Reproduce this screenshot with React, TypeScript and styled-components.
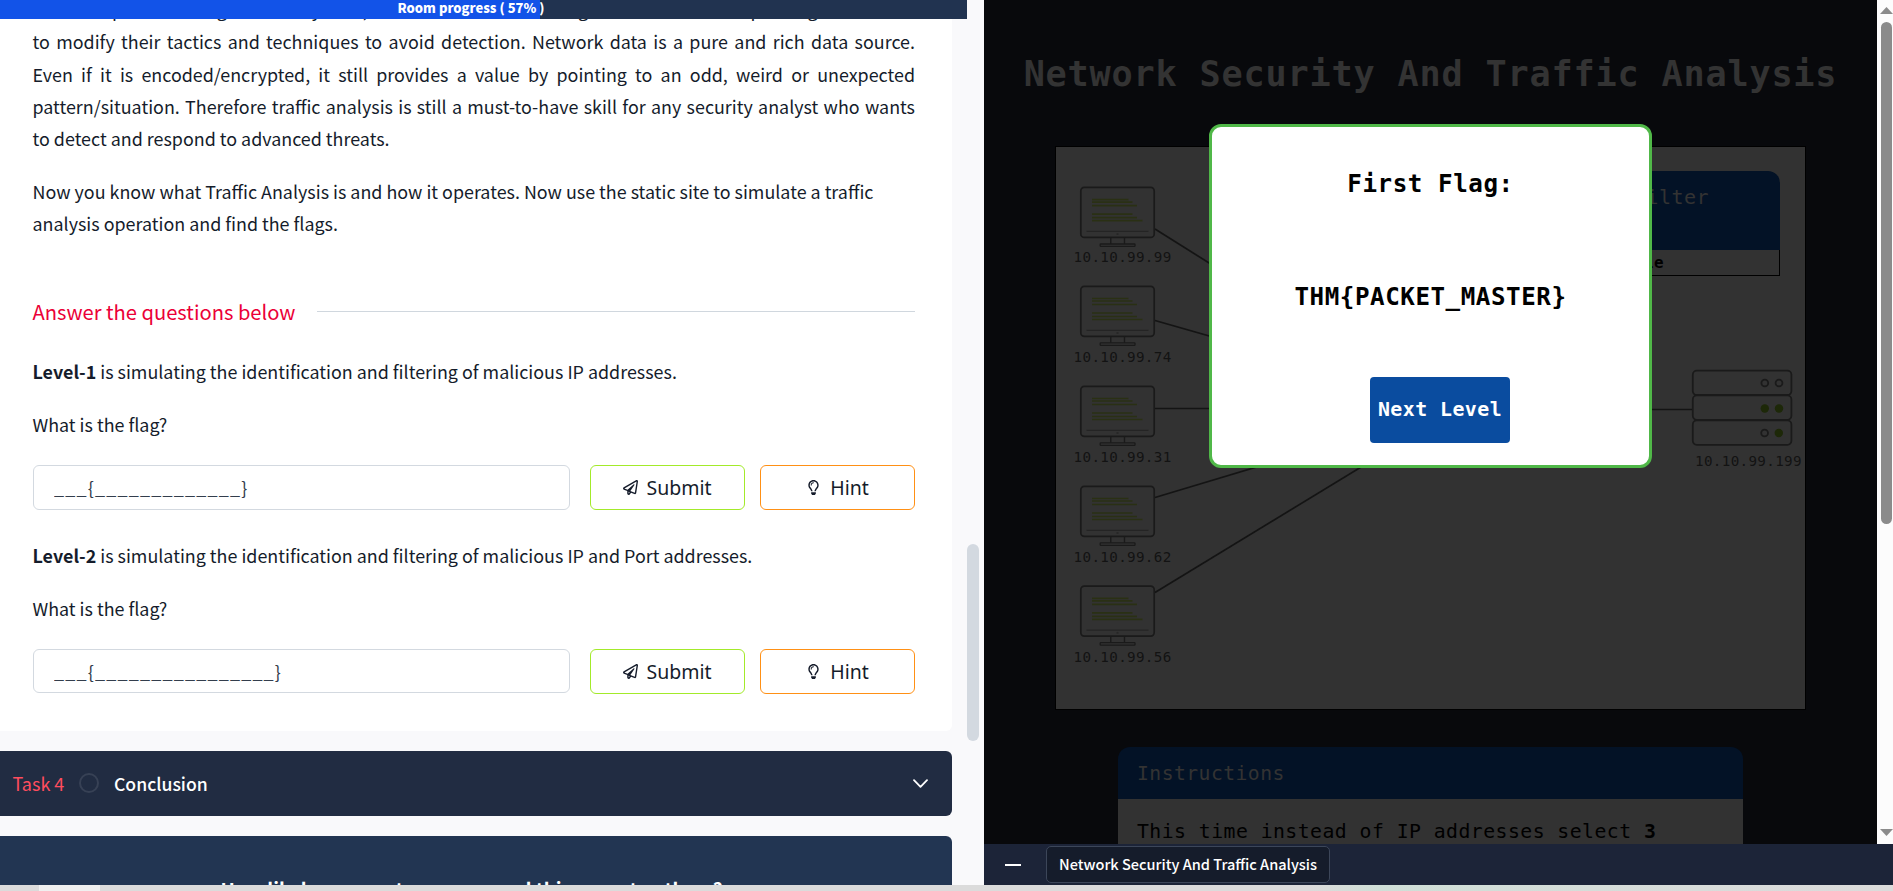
import React from 'react';
import styled, { createGlobalStyle, css } from 'styled-components';
import { FaRegLightbulb, FaRegPaperPlane } from 'react-icons/fa';

const sans = `'Noto Sans CJK SC', 'Open Sans', sans-serif`;
const monoFamily = `'DejaVu Sans Mono', 'Liberation Mono', monospace`;

const mono = (size: number) => css`
  font-family: ${monoFamily};
  font-size: ${size * 0.88}px;
  letter-spacing: ${size * 0.0202}px;
`;

const GlobalStyle = createGlobalStyle`
  * { box-sizing: border-box; }
  body { margin: 0; background: #f9f9fb; overflow: hidden; }
  p, h1, h2 { margin: 0; }
  button, input { font: inherit; }
`;

const Screen = styled.div`
  display: flex;
  flex-direction: column;
  width: 1893px;
  height: 891px;
  overflow: hidden;
  font-family: ${sans};
  color: #151c2b;
`;

const Workspace = styled.div`
  display: flex;
  height: 885px;
`;

const DesktopEdge = styled.div`
  height: 6px;
  padding-left: 39px;
  background: linear-gradient(90deg, #dbdbdb 0 1310px, #cfdfd7 1380px, #d8dcda 1700px, #dbdbdb 1888px);
`;

const EdgeHighlight = styled.div`
  width: 61px;
  height: 6px;
  background: #f0f0f0;
`;

/* Room pane */

const RoomPane = styled.section`
  display: flex;
  flex-direction: column;
  width: 984px;
  height: 885px;
  overflow: hidden;
  background: #f9f9fb;
`;

const ProgressBar = styled.div`
  flex: none;
  width: 967px;
  height: 19px;
  background: linear-gradient(90deg, #1253e8 0 540px, #213350 540px);
  color: #fff;
  font-size: 13px;
  font-weight: 900;
  line-height: 15px;
  padding-left: 397.5px;
  white-space: pre;
`;

const RoomBody = styled.div`
  display: flex;
  flex: 1;
  min-height: 0;
`;

const RoomColumn = styled.div`
  display: flex;
  flex-direction: column;
  gap: 20px;
  width: 952px;
  overflow: hidden;
`;

const RoomScrollTrack = styled.div`
  width: 32px;
  padding: 525px 0 0 15px;
`;

const RoomScrollThumb = styled.div`
  width: 12px;
  height: 197px;
  border-radius: 6px;
  background: #d3d9e0;
`;

const TaskCard = styled.article`
  flex: none;
  height: 712px;
  padding: 0 37px 0 33px;
  border-radius: 0 0 6px 0;
  background: #fff;
  overflow: hidden;
  font-size: 17.9px;
  line-height: 32.2px;
`;

const TextLine = styled.p<{ $justify?: boolean; $top?: number }>`
  height: 32.2px;
  margin-top: ${(p) => p.$top ?? 0}px;
  margin-left: -0.5px;
  white-space: nowrap;
  text-align: ${(p) => (p.$justify ? 'justify' : 'left')};
  text-align-last: ${(p) => (p.$justify ? 'justify' : 'left')};
`;

const SectionTitle = styled.h2`
  display: flex;
  align-items: center;
  gap: 21px;
  height: 36px;
  margin: 54.5px 0 0 -0.5px;
  color: #eb0037;
  font-size: 20.15px;
  font-weight: 400;
  line-height: 36px;

  &::after {
    content: '';
    flex: 1;
    height: 1px;
    background: #d0d7de;
  }
`;

const AnswerRow = styled.div<{ $top: number }>`
  display: flex;
  margin-top: ${(p) => p.$top}px;
`;

const AnswerInput = styled.input<{ $height: number }>`
  width: 537px;
  height: ${(p) => p.$height}px;
  margin-right: 20px;
  padding: 0 20px 1px;
  border: 1px solid #d3d9e0;
  border-radius: 6px;
  background: #fff;
  color: #333d4c;
  font-size: 18px;
  letter-spacing: 1.18px;
  outline: none;

  &::placeholder {
    color: #333d4c;
  }
`;

const ActionButton = styled.button<{ $color: string; $gap: number }>`
  display: flex;
  align-items: center;
  justify-content: center;
  gap: ${(p) => p.$gap}px;
  width: 155px;
  height: 45px;
  margin-right: 15px;
  padding: 0;
  border: 1px solid ${(p) => p.$color};
  border-radius: 6px;
  background: #fff;
  color: #151c2b;
  font-family: 'Noto Sans', 'Open Sans', sans-serif;
  font-size: 19.5px;

  svg {
    width: auto;
    height: 15px;
  }

  &:last-child {
    margin-right: 0;
  }
`;

const TaskHeader = styled.div`
  display: flex;
  flex: none;
  align-items: center;
  height: 65px;
  padding: 0 24px 1px 12.5px;
  border-radius: 0 6px 6px 0;
  background: #212c42;
  font-size: 18px;
`;

const TaskNumber = styled.span`
  width: 66.5px;
  color: #ff4d5e;
`;

const TaskStatus = styled.span`
  width: 20px;
  height: 20px;
  margin-right: 15px;
  border: 2px solid #374155;
  border-radius: 50%;
`;

const TaskName = styled.span`
  flex: 1;
  color: #fff;
  font-size: 17.6px;
  font-weight: 500;
`;

const SurveyCard = styled.div`
  flex: none;
  height: 120px;
  padding: 38px 9px 0 0;
  border-radius: 0 6px 0 0;
  background: #223552;
  color: #fff;
  font-size: 18.95px;
  font-weight: 700;
  line-height: 30px;
  text-align: center;
`;

/* Site pane */

const SitePane = styled.section`
  display: flex;
  flex-direction: column;
  width: 909px;
`;

const SiteFrame = styled.div`
  display: flex;
  height: 844px;
  overflow: hidden;
`;

const SiteContent = styled.main`
  position: relative;
  display: flex;
  flex-direction: column;
  align-items: center;
  width: 893px;
  padding-top: 52px;
  overflow: hidden;
  background: #08090c;
`;

const SiteTitle = styled.h1`
  ${mono(40)}
  flex: none;
  height: 94px;
  line-height: 44px;
  color: #333;
  white-space: nowrap;
`;

const Diagram = styled.div`
  position: relative;
  flex: none;
  width: 751px;
  height: 564px;
  border: 1px solid #000;
  background: #323232;
`;

const DiagramSvg = styled.svg`
  display: block;
`;

const NodeText = styled.text`
  ${mono(16.2)}
  fill: #131313;
`;

const FilterPanel = styled.div`
  position: absolute;
  top: 24px;
  right: 25px;
  width: 330px;
`;

const FilterHeader = styled.div`
  ${mono(22.8)}
  height: 79px;
  padding: 12px 71px 0 0;
  border-radius: 12px 12px 0 0;
  background: #031226;
  color: #333;
  line-height: 29px;
  text-align: right;
`;

const FilterColumn = styled.div`
  ${mono(18)}
  height: 26px;
  padding-right: 115px;
  border: 1px solid #000;
  border-top: 0;
  color: #000;
  font-weight: 700;
  line-height: 25px;
  text-align: right;
`;

const Instructions = styled.div`
  flex: none;
  width: 625px;
  margin-top: 37px;
`;

const InstructionsHeader = styled.div`
  ${mono(22.4)}
  height: 52px;
  padding-left: 19px;
  border-radius: 12px 12px 0 0;
  background: #031226;
  color: #333;
  line-height: 54px;
`;

const InstructionsBody = styled.div`
  ${mono(22.5)}
  height: 100px;
  padding: 18px 0 0 19px;
  background: #323232;
  color: #000;
  line-height: 30px;
  white-space: nowrap;
`;

const FlagDialog = styled.div`
  position: absolute;
  top: 124px;
  left: 225px;
  display: flex;
  flex-direction: column;
  align-items: center;
  width: 443px;
  height: 344px;
  padding-top: 37px;
  border: 3px solid #50b848;
  border-radius: 12px;
  background: #fff;
  color: #000;
`;

const FlagText = styled.p<{ $gap: number }>`
  ${mono(27.5)}
  height: 40px;
  margin-bottom: ${(p) => p.$gap}px;
  font-weight: 700;
  line-height: 40px;
  white-space: nowrap;
`;

const NextButton = styled.button`
  ${mono(22.6)}
  width: 140px;
  height: 66px;
  margin-left: 18px;
  padding: 0 0 1px 1px;
  border: 0;
  border-radius: 4px;
  background: #0a4c9f;
  color: #fff;
  font-weight: 700;
  white-space: nowrap;
`;

const SiteScrollbar = styled.div`
  display: flex;
  flex-direction: column;
  align-items: flex-end;
  width: 16px;
  padding: 7px 0 8px;
  background: #fcfcfc;
`;

const ScrollArrow = styled.span<{ $down?: boolean }>`
  width: 13px;
  height: 7px;
  background: #8b8b8b;
  clip-path: ${(p) => (p.$down ? 'polygon(0 0, 100% 0, 50% 100%)' : 'polygon(50% 0, 100% 100%, 0 100%)')};
`;

const SiteThumb = styled.span`
  width: 11px;
  height: 502px;
  margin: 8px 1px auto 0;
  border-radius: 6px;
  background: #8b8b8b;
`;

const TabBar = styled.div`
  display: flex;
  align-items: center;
  height: 41px;
  padding-left: 21px;
  background: #1c2438;
`;

const Minimize = styled.span`
  width: 16px;
  height: 2px;
  margin: 0 25px 0 0;
  background: #fff;
`;

const SiteTab = styled.div`
  width: 284px;
  height: 37px;
  border: 1px solid #3c4659;
  border-radius: 5px;
  background: #151c2b;
  color: #fff;
  font-size: 14.55px;
  font-weight: 500;
  line-height: 34px;
  text-align: center;
  white-space: nowrap;
`;

interface Host {
  ip: string;
  y: number;
  link: [number, number, number, number];
}

const hosts: Host[] = [
  { ip: '10.10.99.99', y: 186.6, link: [1155, 229, 1440, 408] },
  { ip: '10.10.99.74', y: 285.5, link: [1155, 320.5, 1440, 402] },
  { ip: '10.10.99.31', y: 385.5, link: [1155, 408.5, 1440, 408.5] },
  { ip: '10.10.99.62', y: 485.5, link: [1155, 497.5, 1440, 412] },
  { ip: '10.10.99.56', y: 585.3, link: [1155, 592.5, 1440, 419] },
];

const codeLines = [
  [13, 37],
  [15.5, 41],
  [19, 45.5],
  [27.5, 41],
  [31, 45.5],
  [34, 51],
];

const Monitor = ({ y }: { y: number }) => (
  <g transform={`translate(1080 ${y})`} fill="none" stroke="#1a1a1a" strokeWidth="1.7">
    <rect x="0.8" y="0.8" width="73.4" height="50" rx="3.5" />
    <path d="M6.5 44.8H68.5" stroke="#242424" strokeWidth="1.3" />
    <path d="M36.5 47.5h2" stroke="#262626" />
    <path d="M30.8 51v6.3M44.5 51v6.3" strokeWidth="1.4" />
    <rect x="20.2" y="57.4" width="34.8" height="2.4" rx="0.6" strokeWidth="1.3" />
    {codeLines.map(([ly, width]) => (
      <path key={ly} d={`M12 ${ly}H${width + 11.5}`} stroke="#2a3014" strokeWidth="1.7" />
    ))}
  </g>
);

const Server = () => (
  <g fill="none" stroke="#1a1a1a" strokeWidth="1.8">
    {[370.6, 395.4, 420.4].map((y) => (
      <rect key={y} x="1692.8" y={y} width="98.6" height="24.4" rx="4" />
    ))}
    <circle cx="1764.8" cy="383" r="3.4" />
    <circle cx="1779" cy="383" r="3.4" />
    <circle cx="1764.6" cy="433" r="3.4" />
    <g fill="#1d2808" stroke="none">
      <circle cx="1764.8" cy="408.5" r="4.2" />
      <circle cx="1779" cy="408.5" r="4.2" />
      <circle cx="1778.8" cy="433" r="4.2" />
    </g>
  </g>
);

const NetworkDiagram = () => (
  <Diagram>
    <DiagramSvg width="749" height="562" viewBox="1056 147 749 562">
      {hosts.map(({ ip, link: [x1, y1, x2, y2] }) => (
        <line key={ip} x1={x1} y1={y1} x2={x2} y2={y2} stroke="#141414" strokeWidth="1.7" />
      ))}
      <line x1="1440" y1="409.5" x2="1692" y2="409.5" stroke="#141414" strokeWidth="1.7" />
      {hosts.map(({ ip, y }, i) => (
        <g key={ip}>
          <Monitor y={y} />
          <NodeText x="1073.6" y={262.2 + i * 99.9}>{ip}</NodeText>
        </g>
      ))}
      <Server />
      <NodeText x="1695" y="466">10.10.99.199</NodeText>
    </DiagramSvg>
    <FilterPanel>
      <FilterHeader>Traffic Filter</FilterHeader>
      <FilterColumn>Rule</FilterColumn>
    </FilterPanel>
  </Diagram>
);

interface QuestionProps {
  level: string;
  subject: string;
  placeholder: string;
  top: number;
  inputHeight: number;
}

const Question = ({ level, subject, placeholder, top, inputHeight }: QuestionProps) => (
  <>
    <TextLine $top={top}>
      <strong>{level}</strong> is simulating the identification and filtering of malicious {subject}
    </TextLine>
    <TextLine $top={21}>What is the flag?</TextLine>
    <AnswerRow $top={25.2}>
      <AnswerInput $height={inputHeight} placeholder={placeholder} />
      <ActionButton $color="#a3ea2a" $gap={8}>
        <FaRegPaperPlane />
        Submit
      </ActionButton>
      <ActionButton $color="#ff9015" $gap={9}>
        <FaRegLightbulb />
        Hint
      </ActionButton>
    </AnswerRow>
  </>
);

const App = () => (
  <>
    <GlobalStyle />
    <Screen>
      <Workspace>
        <RoomPane>
          <ProgressBar>Room progress ( 57% )</ProgressBar>
          <RoomBody>
            <RoomColumn>
              <TaskCard>
                <TextLine $justify $top={-25.8}>
                  All the improvements get in reality later, so the attackers are being harder and harder pushing on in order
                </TextLine>
                <TextLine $justify>
                  to modify their tactics and techniques to avoid detection. Network data is a pure and rich data source.
                </TextLine>
                <TextLine $justify>
                  Even if it is encoded/encrypted, it still provides a value by pointing to an odd, weird or unexpected
                </TextLine>
                <TextLine $justify>
                  pattern/situation. Therefore traffic analysis is still a must-to-have skill for any security analyst who wants
                </TextLine>
                <TextLine>to detect and respond to advanced threats.</TextLine>
                <TextLine $top={20.7}>
                  Now you know what Traffic Analysis is and how it operates. Now use the static site to simulate a traffic
                </TextLine>
                <TextLine>analysis operation and find the flags.</TextLine>
                <SectionTitle>Answer the questions below</SectionTitle>
                <Question
                  level="Level-1"
                  subject="IP addresses."
                  placeholder="___{_____________}"
                  top={25}
                  inputHeight={45}
                />
                <Question
                  level="Level-2"
                  subject="IP and Port addresses."
                  placeholder="___{________________}"
                  top={28.4}
                  inputHeight={44}
                />
              </TaskCard>
              <TaskHeader>
                <TaskNumber>Task 4</TaskNumber>
                <TaskStatus />
                <TaskName>Conclusion</TaskName>
                <svg width="15" height="9" viewBox="0 0 15 9" fill="none" stroke="#fff" strokeWidth="1.8" strokeLinecap="round" strokeLinejoin="round">
                  <path d="M1 1.2 7.5 7.8 14 1.2" />
                </svg>
              </TaskHeader>
              <SurveyCard>How likely are you to recommend this room to others?</SurveyCard>
            </RoomColumn>
            <RoomScrollTrack>
              <RoomScrollThumb />
            </RoomScrollTrack>
          </RoomBody>
        </RoomPane>
        <SitePane>
          <SiteFrame>
            <SiteContent>
              <SiteTitle>Network Security And Traffic Analysis</SiteTitle>
              <NetworkDiagram />
              <Instructions>
                <InstructionsHeader>Instructions</InstructionsHeader>
                <InstructionsBody>
                  This time instead of IP addresses select <b>3</b>
                </InstructionsBody>
              </Instructions>
              <FlagDialog>
                <FlagText $gap={73}>First Flag:</FlagText>
                <FlagText $gap={60}>THM&#123;PACKET_MASTER&#125;</FlagText>
                <NextButton>Next Level</NextButton>
              </FlagDialog>
            </SiteContent>
            <SiteScrollbar>
              <ScrollArrow />
              <SiteThumb />
              <ScrollArrow $down />
            </SiteScrollbar>
          </SiteFrame>
          <TabBar>
            <Minimize />
            <SiteTab>Network Security And Traffic Analysis</SiteTab>
          </TabBar>
        </SitePane>
      </Workspace>
      <DesktopEdge>
        <EdgeHighlight />
      </DesktopEdge>
    </Screen>
  </>
);

export default App;
